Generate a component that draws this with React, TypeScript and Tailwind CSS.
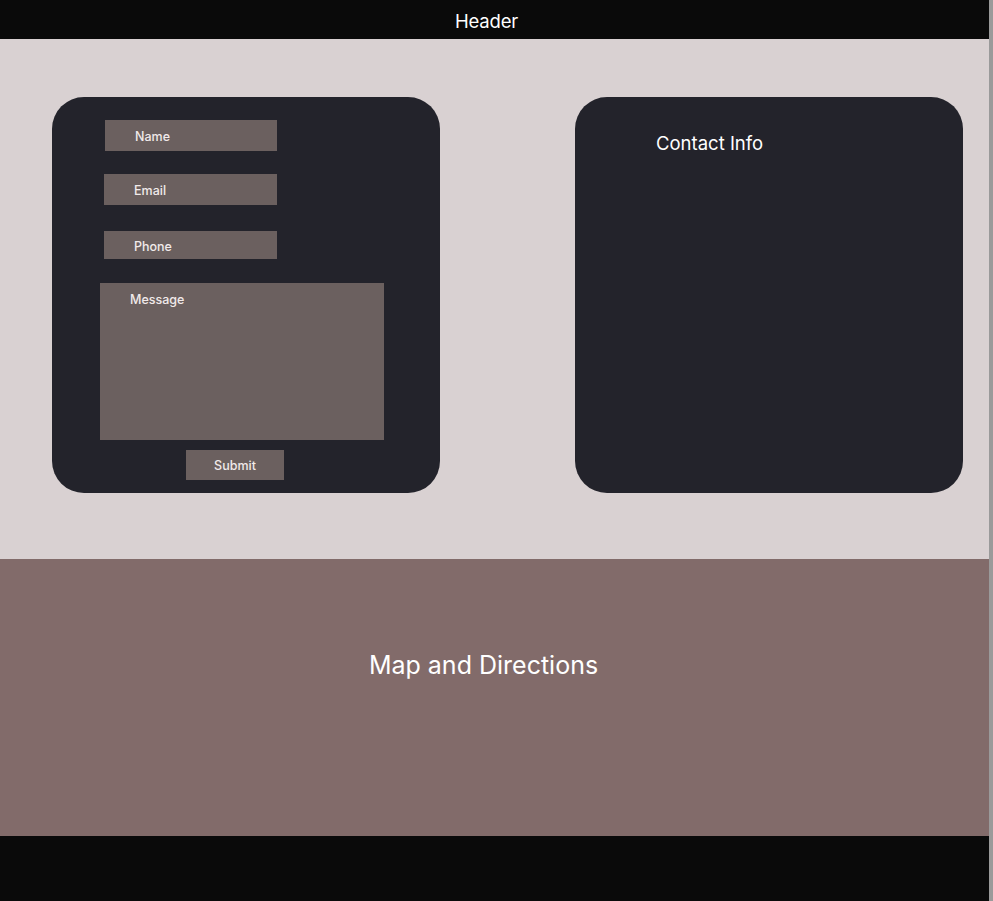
import React from 'react';

const fieldText = 'text-[12.5px] font-medium text-[#f1eaea] leading-none';

export default function App() {
  return (
    <div className="flex min-h-[901px] w-full font-['Inter','Liberation_Sans',sans-serif]">
      <div className="flex flex-1 flex-col">
        <header className="flex h-[39px] items-center justify-center bg-[#0a0a0a] pt-[5px]">
          <span className="ml-[-16px] text-[18.5px] tracking-[-0.2px] text-white">Header</span>
        </header>

        <section className="flex h-[520px] items-start gap-[135px] bg-[#d9d1d2] pl-[52px] pt-[58px]">
          <form className="flex h-[396px] w-[388px] flex-col rounded-[32px] bg-[#23232b]">
            <div className={`ml-[53px] mt-[23px] flex h-[31px] w-[172px] items-center bg-[#6b605f] pl-[30px] pt-[4px] ${fieldText}`}>
              Name
            </div>
            <div className={`ml-[52px] mt-[23px] flex h-[31px] w-[173px] items-center bg-[#6b605f] pl-[30px] pt-[4px] ${fieldText}`}>
              Email
            </div>
            <div className={`ml-[52px] mt-[26px] flex h-[28px] w-[173px] items-center bg-[#6b605f] pl-[30px] pt-[4px] ${fieldText}`}>
              Phone
            </div>
            <div className={`ml-[48px] mt-[24px] h-[157px] w-[284px] bg-[#6b605f] pl-[30px] pt-[11px] ${fieldText}`}>
              Message
            </div>
            <button
              type="button"
              className={`ml-[134px] mt-[10px] flex h-[30px] w-[98px] items-center justify-center bg-[#6b605f] pt-[3px] ${fieldText}`}
            >
              Submit
            </button>
          </form>

          <div className="h-[396px] w-[388px] rounded-[32px] bg-[#23232b] pl-[81px] pt-[33px]">
            <h2 className="text-[18.5px] text-white">Contact Info</h2>
          </div>
        </section>

        <section className="flex h-[277px] items-center justify-center bg-[#826b6a] pb-[64px]">
          <h2 className="ml-[-22px] text-[25px] text-white">Map and Directions</h2>
        </section>

        <footer className="flex-1 bg-[#0a0a0a]" />
      </div>
      <div className="w-[4px] bg-[#9a9a9a]" />
    </div>
  );
}
